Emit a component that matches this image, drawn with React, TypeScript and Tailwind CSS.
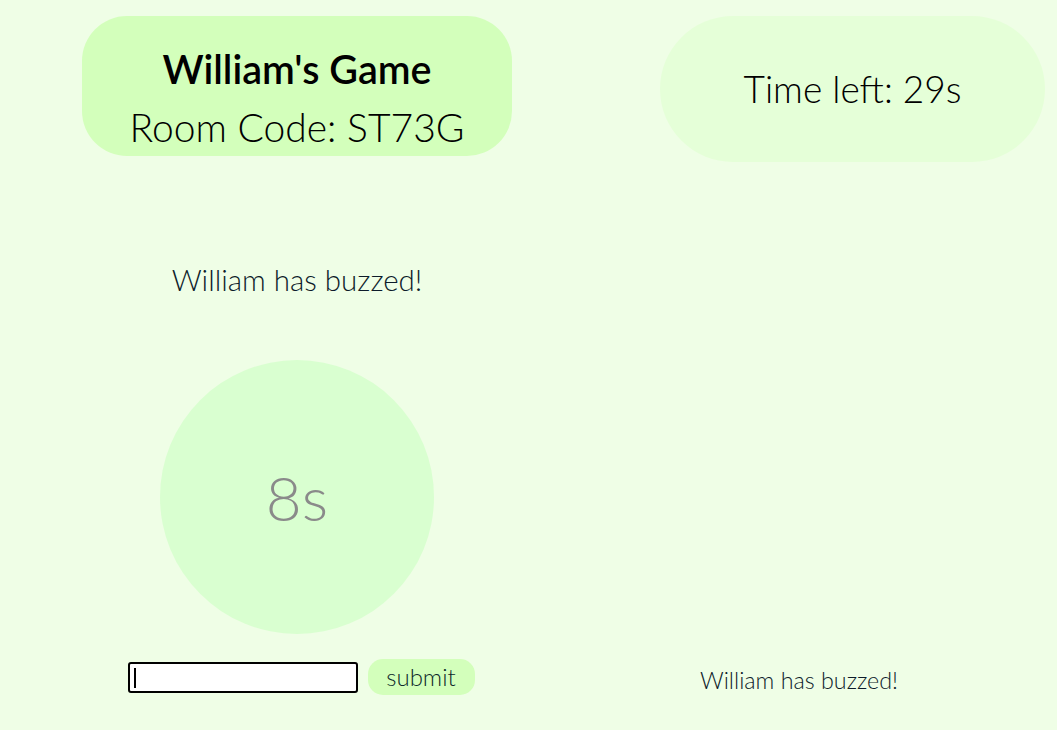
import React from "react";

export default function App() {
  const font = { fontFamily: "Lato, 'Open Sans', sans-serif" };
  return (
    <div style={font} className="w-[1057px] h-[730px] bg-[#effee6] flex text-black overflow-hidden">
      <div className="w-[594px] flex flex-col items-center">
        <div className="mt-[16px] w-[430px] h-[140px] rounded-[45px] bg-[#d3ffbb] flex flex-col items-center pt-[31px]">
          <div className="text-[39.5px] font-semibold leading-[44px]">William's Game</div>
          <div className="text-[39px] font-light leading-[44px] mt-[14px]">Room Code: ST73G</div>
        </div>
        <div className="mt-[106px] text-[29.5px] font-light leading-[36px] text-[#0d1b2a]">William has buzzed!</div>
        <div className="mt-[62px] w-[274px] h-[274px] rounded-full bg-[#d9ffd0] flex items-center justify-center">
          <span className="text-[62px] font-light text-[#8a8a8a] leading-none">8s</span>
        </div>
        <div className="mt-[25px] flex items-center gap-[10px] pl-[8px]">
          <div className="relative">
            <input className="block w-[230px] h-[31px] border-2 border-black rounded-[3px] bg-white outline-none" />
            <div className="absolute left-[6px] top-[6px] w-[2px] h-[20px] bg-black" />
          </div>
          <button className="w-[107px] h-[36px] rounded-[15px] bg-[#d3ffbb] text-[24px] font-light text-[#0d2a2a] leading-none">submit</button>
        </div>
      </div>
      <div className="flex-1 flex flex-col pl-[66px]">
        <div className="mt-[16px] w-[385px] h-[146px] rounded-full bg-[#e5ffd8] flex items-center justify-center">
          <span className="text-[37px] font-light">Time left: 29s</span>
        </div>
        <div className="mt-[503px] pl-[40px] text-[23.3px] font-light text-[#0d1b2a] leading-[30px]">William has buzzed!</div>
      </div>
    </div>
  );
}
